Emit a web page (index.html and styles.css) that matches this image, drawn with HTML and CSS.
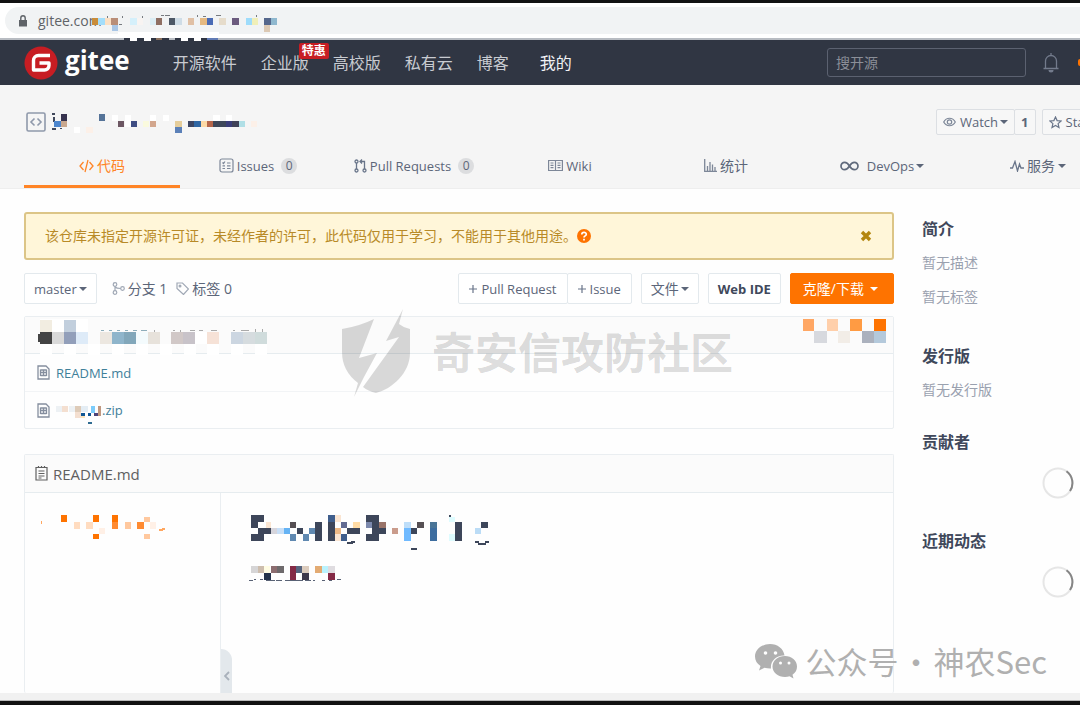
FILE: index.html
```
<!DOCTYPE html>
<html lang="zh-CN">
<head>
<meta charset="utf-8">
<meta name="viewport" content="width=device-width, initial-scale=1">
<title>Gitee</title>
<link rel="stylesheet" href="styles.css">
</head>
<body>
<div class="page">
  <div class="address-bar">
    <div class="address">
      <svg class="lock" width="10" height="12" viewBox="0 0 10 12" aria-hidden="true"><path d="M1 5h8v6.500H1z" fill="#5f6368"/><path d="M2.800 5V3a2.200 2.200 0 0 1 4.400 0v2" fill="none" stroke="#5f6368" stroke-width="1.400"/></svg>
      <span class="url">gitee.com/</span>
      <svg class="url-mask" width="192" height="28" viewBox="90 14 192 28" shape-rendering="crispEdges" aria-hidden="true">
        <path fill="#f1f3f4" d="M101 14h20v18h-20z"/>
        <path fill="#c98d3a" d="M92 18h6v7h-6z"/><path fill="#a4defb" d="M98 18h7v7h-7z"/><path fill="#fbe0c4" d="M105 18h6v7h-6z"/><path fill="#b98e78" d="M111 18h7v7h-7z"/><path fill="#a9c6e6" d="M112 25h6v6h-6z"/>
        <path fill="#777b80" d="M107 16h1v2h-1zM122 16h1v2h-1zM142 16h1v2h-1zM161 15h3v1h-3zM165 15h5v1h-5zM197 15h1v2h-1zM203 16h3v1h-3zM216 15h5v1h-5zM256 15h1v2h-1zM119 24h3v1h-3z"/>
        <path fill="#d5f0fb" d="M130 18h7v7h-7z"/><path fill="#f8f4f2" d="M137 18h6v7h-6z"/><path fill="#dceef5" d="M150 18h6v7h-6z"/><path fill="#8f6f63" d="M156 18h6v7h-6z"/><path fill="#4d5866" d="M169 18h6v7h-6z"/><path fill="#cfdde7" d="M175 18h7v7h-7z"/><path fill="#e0c0a5" d="M188 18h6v7h-6z"/><path fill="#e5b981" d="M200 18h7v7h-7z"/><path fill="#4a6bb5" d="M207 18h6v7h-6z"/><path fill="#e6dccb" d="M219 18h7v7h-7z"/><path fill="#6b5b7e" d="M232 18h7v7h-7z"/><path fill="#9edcfb" d="M246 18h6v7h-6z"/><path fill="#f0efb8" d="M252 18h6v7h-6z"/><path fill="#55678c" d="M264 18h7v7h-7z"/><path fill="#8fb8cf" d="M271 18h6v7h-6z"/><path fill="#dcc9b4" d="M264 25h6v7h-6z"/>
        <path fill="#fff" d="M118 32h101v6H118zM130 38h7v3h-7zM144 38h7v3h-7zM181 38h7v3h-7zM194 38h7v3h-7z"/><path fill="#2f3543" d="M124 38h6v2h-6zM137 38h7v2h-7zM151 38h5v2h-5zM162 38h7v2h-7zM175 38h6v2h-6zM188 38h6v2h-6zM201 38h6v2h-6z"/><path fill="#8a715f" d="M156 38h6v2h-6z"/><path fill="#617bb5" d="M207 38h11v2h-11z"/>
      </svg>
    </div>
  </div>

  <nav class="nav">
    <a class="brand" href="#" aria-label="gitee">
      <svg width="34" height="34" viewBox="0 0 34 34" aria-hidden="true"><circle cx="17" cy="17" r="16.500" fill="#c71d23"/><path d="M26 9.500H14.500a5 5 0 0 0-5 5V24H20.500a4.500 4.500 0 0 0 4.500-4.500v-2.500H15.500" fill="none" stroke="#fff" stroke-width="3.400" stroke-linejoin="round"/></svg>
      <span>gitee</span>
    </a>
    <div class="nav-links">
      <a href="#">开源软件</a>
      <a class="hot" href="#">企业版<span class="badge">特惠</span></a>
      <a href="#">高校版</a>
      <a href="#">私有云</a>
      <a href="#">博客</a>
      <a class="mine" href="#">我的</a>
    </div>
    <input class="search" type="search" placeholder="搜开源" aria-label="搜开源">
    <button class="bell" type="button" aria-label="通知">
      <svg width="16" height="20" viewBox="0 0 16 20" fill="none" stroke="#737b8c" stroke-width="1.300"><path d="M.500 15.500h15M2.500 15V8a5.500 5.500 0 0 1 11 0v7M8 2.500V0"/><path d="M5.500 17a2.500 2.500 0 0 0 5 0z" fill="#737b8c" stroke="none"/></svg>
    </button>
    <span class="dot"></span>
  </nav>

  <header class="repo-head">
    <div class="repo-title">
      <div class="repo-name">
        <svg width="20" height="20" viewBox="0 0 20 20" fill="none" stroke="#8f99ab" stroke-width="1.600" aria-hidden="true"><rect x="1" y="1" width="18" height="18" rx="1.500"/><path d="M8.500 6.500 5 10l3.500 3.500M11.500 6.500 15 10l-3.500 3.500"/></svg>
        <svg width="218" height="26" viewBox="50 109 218 26" shape-rendering="crispEdges" aria-hidden="true">
          <path fill="#40485b" d="M52 113h3v2h-3zM53 117h2v5h-2zM52 128h4v2h-4zM60 128h2v1h-2z"/><path fill="#4d86cd" d="M54 121h7v6h-7z"/><path fill="#37334f" d="M61 114h6v7h-6z"/><path fill="#c9a88f" d="M61 121h6v6h-6z"/><path fill="#557398" d="M99 114h6v7h-6z"/><path fill="#6d5763" d="M118 121h6v6h-6z"/><path fill="#3f4d83" d="M131 121h6v6h-6z"/><path fill="#fafade" d="M143 121h6v6h-6z"/><path fill="#d2a68d" d="M150 121h6v6h-6z"/><path fill="#e5cd9b" d="M175 121h7v6h-7z"/><path fill="#5b80b8" d="M175 127h7v6h-7z"/><path fill="#3c4562" d="M188 121h6v6h-6z"/><path fill="#2f66a3" d="M194 121h7v6h-7z"/><path fill="#fcd9a6" d="M201 121h6v6h-6z"/><path fill="#b5664b" d="M207 121h6v6h-6z"/><path fill="#3d4759" d="M213 121h13v6h-13z"/><path fill="#3a3d78" d="M226 121h6v6h-6z"/><path fill="#3f4157" d="M232 121h7v6h-7z"/><path fill="#b0dfe6" d="M239 121h6v6h-6z"/><path fill="#fcf0e8" d="M251 121h6v6h-6zM86 127h7v6h-7z"/><path fill="#fff" d="M74 127h6v6h-6zM112 115h6v6h-6zM125 115h6v12h-6zM150 115h6v6h-6zM163 115h6v6h-6zM213 115h7v6h-7zM226 115h6v6h-6z"/>
        </svg>
      </div>
      <div class="button-group">
        <button class="btn small" type="button"><svg width="13" height="12" viewBox="0 0 13 12" fill="none" stroke="#7d8798" stroke-width="1.200" aria-hidden="true"><path d="M.700 6C3.500 1 9.500 1 12.300 6 9.500 11 3.500 11 .700 6z"/><circle cx="6.500" cy="6" r="2.200"/></svg>Watch<i class="caret"></i></button><a class="btn small count" href="#">1</a>
      </div>
      <button class="btn small star" type="button"><svg width="13" height="13" viewBox="0 0 13 13" fill="none" stroke="#69758a" stroke-width="1.200" aria-hidden="true"><path d="m6.500 1 1.600 3.600 4 .400-3 2.600.900 3.900-3.500-2-3.500 2 .900-3.900-3-2.600 4-.400z"/></svg>Star</button>
    </div>
    <div class="tabs">
      <a class="tab active" href="#"><svg width="15" height="14" viewBox="0 0 15 14" fill="none" stroke="currentColor" stroke-width="1.300" aria-hidden="true"><path d="M4.500 3 1 7l3.500 4M10.500 3 14 7l-3.500 4M9 1 6 13"/></svg>代码</a>
      <a class="tab latin" href="#"><svg width="15" height="15" viewBox="0 0 15 15" fill="none" stroke="#7d8798" stroke-width="1.200" aria-hidden="true"><rect x="1" y="1" width="13" height="13" rx="2"/><path d="m3.500 4.500 1 1 1.500-2M8 5h3.500M3.500 7.800H6M8 7.800h3.500M3.500 10.500H6M8 10.500h3.500"/></svg>Issues<span class="num">0</span></a>
      <a class="tab latin" href="#"><svg width="13" height="14" viewBox="0 0 13 14" fill="none" stroke="#69758a" stroke-width="1.300" aria-hidden="true"><circle cx="2.500" cy="2.500" r="1.500"/><circle cx="2.500" cy="11.500" r="1.500"/><circle cx="10.500" cy="11.500" r="1.500"/><path d="M2.500 4v6M10.500 10V2.500H6M8 .500l-2 2 2 2"/></svg>Pull Requests<span class="num">0</span></a>
      <a class="tab latin" href="#"><svg width="15" height="13" viewBox="0 0 15 13" fill="none" stroke="#7d8798" stroke-width="1.200" aria-hidden="true"><path d="M.600 1.500h13.800v10H.600zM7.500 1.500v10M2.500 4h3M2.500 6.300h3M2.500 8.600h3M9.500 4h3M9.500 6.300h3M9.500 8.600h3"/></svg>Wiki</a>
      <a class="tab" href="#"><svg width="13" height="13" viewBox="0 0 13 13" fill="none" stroke="#7d8798" stroke-width="1.300" aria-hidden="true"><path d="M.700 0v12.300H13M3.500 12V7M6 12V3M8.500 12V5.500M11 12V8"/></svg>统计</a>
      <a class="tab latin wide" href="#"><svg width="19" height="10" viewBox="0 0 19 10" fill="none" stroke="#606a7c" stroke-width="1.700" aria-hidden="true"><path d="M9.500 5C8 2.500 6.500 1.300 4.700 1.300a3.700 3.700 0 0 0 0 7.400C6.500 8.700 8 7.500 9.500 5s3-3.700 4.800-3.700a3.700 3.700 0 0 1 0 7.400C12.500 8.700 11 7.500 9.500 5z"/></svg>DevOps<i class="caret"></i></a>
      <a class="tab" href="#"><svg width="14" height="12" viewBox="0 0 14 12" fill="none" stroke="#69758a" stroke-width="1.300" aria-hidden="true"><path d="M0 8h2.500L5 1.500 7.500 11 9.500 4 11 8h3"/></svg>服务<i class="caret"></i></a>
    </div>
  </header>

  <div class="content">
    <main class="main">
      <div class="notice">
        <span>该仓库未指定开源许可证，未经作者的许可，此代码仅用于学习，不能用于其他用途。</span>
        <svg width="14" height="14" viewBox="0 0 14 14" aria-hidden="true"><circle cx="7" cy="7" r="7" fill="#fe7300"/><path d="M4.800 5.500C4.800 2.700 9.300 2.800 9.300 5.300 9.300 7 7 6.800 7 8.500M7 9.700v1.800" fill="none" stroke="#fff" stroke-width="1.700"/></svg>
        <button class="close" type="button" aria-label="关闭"><svg width="12" height="12" viewBox="0 0 12 12"><path d="m2 2 8 8M10 2l-8 8" stroke="#b4860e" stroke-width="3.400"/></svg></button>
      </div>

      <div class="toolbar">
        <button class="btn latin" type="button">master<i class="caret"></i></button>
        <a class="ref branches" href="#"><svg width="13" height="13" viewBox="0 0 13 13" fill="none" stroke="#a0a8b5" stroke-width="1.200" aria-hidden="true"><circle cx="3" cy="2.500" r="1.800"/><circle cx="3" cy="10.500" r="1.800"/><circle cx="10.500" cy="6.500" r="1.800"/><path d="M3 4.300v4.400M3 5c1.500 1.500 3.500 1.500 5.700 1.500"/></svg>分支 1</a>
        <a class="ref" href="#"><svg width="13" height="13" viewBox="0 0 13 13" fill="none" stroke="#a0a8b5" stroke-width="1.200" aria-hidden="true"><path d="M1 1h5.500l6 6-5 5.500L1 6.500z"/><circle cx="4" cy="4" r=".900"/></svg>标签 0</a>
        <div class="button-group push">
          <button class="btn latin" type="button"><svg width="8" height="8" viewBox="0 0 8 8" aria-hidden="true"><path d="M0 4h8M4 0v8" stroke="#69758a" stroke-width="1.200"/></svg>Pull Request</button><button class="btn latin" type="button"><svg width="8" height="8" viewBox="0 0 8 8" aria-hidden="true"><path d="M0 4h8M4 0v8" stroke="#69758a" stroke-width="1.200"/></svg>Issue</button>
        </div>
        <button class="btn" type="button">文件<i class="caret"></i></button>
        <button class="btn latin strong" type="button">Web IDE</button>
        <button class="btn primary" type="button">克隆/下载<i class="caret"></i></button>
      </div>

      <section class="panel files">
        <div class="commit">
          <svg width="240" height="36" viewBox="36 318 240 36" shape-rendering="crispEdges" aria-hidden="true">
            <path fill="#fff" d="M40 318h48v13H40zM40 343h12v11H40zM64 343h12v11H64zM88 343h12v11H88zM112 343h12v11h-12zM136 343h12v11h-12zM160 343h12v11h-12zM184 343h12v11h-12zM207 343h12v11h-12zM231 343h12v11h-12zM255 343h12v11h-12z"/>
            <path fill="#f2ede1" d="M40 319h12v12H40z"/><path fill="#c2cfdd" d="M64 319h12v12H64z"/><path fill="#444" d="M40 331h12v12H40zM38 333h2v8h-2z"/><path fill="#d9d9d9" d="M52 331h12v12H52z"/><path fill="#929fba" d="M64 331h12v12H64z"/><path fill="#deebf8" d="M76 331h12v12H76z"/><path fill="#ece7e0" d="M100 331h12v12h-12z"/><path fill="#8fb5cb" d="M112 331h12v12h-12z"/><path fill="#82a7ba" d="M124 331h12v12h-12z"/><path fill="#f4fbfd" d="M136 331h12v12h-12z"/><path fill="#e7e2db" d="M148 331h12v12h-12z"/><path fill="#d1c8c7" d="M171 331h12v12h-12z"/><path fill="#c8c3c9" d="M183 331h12v12h-12z"/><path fill="#fff" d="M195 331h12v12h-12z"/><path fill="#f6e2d7" d="M207 331h12v12h-12z"/><path fill="#ccd6e1" d="M231 331h12v12h-12z"/><path fill="#d6dcdf" d="M243 331h12v12h-12z"/><path fill="#d0dcdc" d="M255 331h12v12h-12z"/>
            <path fill="#8eaebb" d="M101 329h3v1h-3zM109 329h3v1h-3zM117 329h3v1h-3zM125 329h3v1h-3zM133 329h4v1h-4zM141 329h6v1h-6z"/><path fill="#aaa" d="M154 329h1v2h-1zM173 329h2v1h-2zM180 329h1v2h-1zM190 329h5v1h-5zM199 329h4v1h-4zM211 329h6v1h-6zM233 329h2v1h-2zM241 329h8v1h-8zM255 328h1v3h-1zM262 328h1v3h-1z"/>
          </svg>
          <svg class="commit-side" width="84" height="26" viewBox="802 319 84 26" shape-rendering="crispEdges" aria-hidden="true">
            <path fill="#ffa764" d="M803 319h11v12h-11z"/><path fill="#ffcfaa" d="M827 319h11v12h-11z"/><path fill="#ff9b43" d="M850 319h12v12h-12z"/><path fill="#fe7300" d="M874 319h12v12h-12z"/><path fill="#d7d9de" d="M814 331h13v12h-13z"/><path fill="#f2ede7" d="M838 331h12v12h-12z"/><path fill="#abb1bd" d="M862 331h12v12h-12z"/><path fill="#b4c9db" d="M874 331h12v12h-12z"/>
          </svg>
        </div>
        <a class="file-row latin" href="#">
          <svg width="13" height="15" viewBox="0 0 13 15" fill="none" stroke="#858e9e" stroke-width="1.300" aria-hidden="true"><path d="M1 1h8l3 3v10H1zM3.500 5h6M3.500 7.500h6M3.500 10.500h6M3.500 4.500v6.500M6.500 4.500v6.500M9.500 4.500v6.500"/></svg>
          README.md</a>
        <a class="file-row latin" href="#">
          <svg width="13" height="15" viewBox="0 0 13 15" fill="none" stroke="#858e9e" stroke-width="1.300" aria-hidden="true"><path d="M1 1h8l3 3v10H1zM3.500 5h6M3.500 7.500h6M3.500 10.500h6M3.500 4.500v6.500M6.500 4.500v6.500M9.500 4.500v6.500"/></svg>
          <span class="zip"><svg width="46" height="28" viewBox="55 397 46 28" shape-rendering="crispEdges" aria-hidden="true"><path fill="#edf1f4" d="M55 407h6v6h-6zM68 407h6v6h-6z"/><path fill="#f4dfd0" d="M61 407h6v6h-6zM74 413h6v6h-6z"/><path fill="#decbb8" d="M74 407h6v6h-6z"/><path fill="#e4edf4" d="M80 407h7v6h-7z"/><path fill="#fbe4bd" d="M80 415h4v4h-4z"/><path fill="#0f5695" d="M80 414h4v3h-4zM87 414h3v3h-3z"/><path fill="#7cccfb" d="M90 407h4v7h-4z"/><path fill="#c09880" d="M97 407h3v10h-3z"/><path fill="#4c4378" d="M93 414h4v3h-4z"/><path fill="#2f6c91" d="M87 423h4v2h-4z"/></svg>.zip</span></a>
      </section>

      <section class="panel readme">
        <h2 class="readme-head"><svg width="13" height="15" viewBox="0 0 13 15" fill="none" stroke="#606060" stroke-width="1.200" aria-hidden="true"><path d="M1 1.500h11v12.500H1zM3.500 0v2M6.500 0v2M9.500 0v2M3.500 5h6M3.500 7.500h6M3.500 10h6M3.500 12h3"/></svg>README.md</h2>
        <div class="readme-body">
          <aside class="toc">
            <svg width="128" height="26" viewBox="40 514 128 26" shape-rendering="crispEdges" aria-hidden="true"><path fill="#fe7300" d="M61 515h6v7h-6zM93 515h6v7h-6zM93 534h6v5h-6zM112 515h6v7h-6z"/><path fill="#ff8b32" d="M112 522h6v7h-6zM137 522h7v7h-7z"/><path fill="#ffdcc0" d="M74 522h6v7h-6zM86 522h7v7h-7z"/><path fill="#ffc89e" d="M125 522h6v7h-6zM144 517h6v5h-6zM144 534h6v5h-6z"/><path fill="#fff0e6" d="M150 522h6v7h-6zM99 528h6v6h-6z"/><path fill="#ffa760" d="M41 521h1v3h-1zM159 529h4v2h-4zM162 528h3v2h-3z"/></svg>
            <button class="fold" type="button" aria-label="收起"><svg width="6" height="10" viewBox="0 0 6 10" aria-hidden="true"><path d="M5 1 1 5l4 4" fill="none" stroke="#a9b1bb" stroke-width="1.800"/></svg></button>
          </aside>
          <article class="doc">
            <svg width="250" height="74" viewBox="248 512 250 74" shape-rendering="crispEdges" aria-hidden="true">
              <path fill="#3d465a" d="M251 515h13v7h-13zM251 522h7v6h-7zM258 528h13v6h-13zM251 534h13v7h-13zM297 528h6v6h-6zM315 522h7v19h-7zM328 522h7v19h-7zM347 528h13v6h-13zM366 515h13v7h-13zM372 522h7v6h-7zM372 528h14v6h-14zM366 534h13v7h-13zM411 528h6v6h-6zM455 522h7v19h-7zM481 522h7v6h-7zM411 548h6v2h-6zM347 542h6v2h-6zM351 541h4v2h-4zM475 541h4v2h-4zM478 543h8v2h-8zM485 541h4v2h-4zM449 515h2v2h-2z"/>
              <path fill="#565054" d="M290 522h6v6h-6zM417 522h7v6h-7z"/><path fill="#d6d5dc" d="M271 528h6v6h-6z"/><path fill="#c8dff7" d="M277 528h7v6h-7z"/><path fill="#65b3f4" d="M284 528h6v6h-6z"/><path fill="#6089b1" d="M290 534h6v7h-6zM303 534h6v7h-6zM309 528h6v6h-6z"/><path fill="#3f5e8c" d="M328 515h7v7h-7zM341 534h6v7h-6z"/><path fill="#fae5d2" d="M335 515h6v7h-6zM335 534h6v7h-6zM266 522h5v6h-5z"/><path fill="#edb987" d="M335 528h6v6h-6z"/><path fill="#636b92" d="M341 522h6v6h-6z"/><path fill="#ffdba5" d="M353 522h7v6h-7z"/><path fill="#7c89ad" d="M366 522h6v6h-6z"/><path fill="#9a7469" d="M379 522h7v6h-7z"/><path fill="#ca9c8c" d="M392 528h6v6h-6z"/><path fill="#70baff" d="M404 528h7v13h-7z"/><path fill="#bedef9" d="M404 522h7v6h-7z"/><path fill="#4a7597" d="M430 522h7v6h-7z"/><path fill="#3d6d9f" d="M430 528h7v13h-7z"/><path fill="#defcff" d="M449 517h6v5h-6zM449 534h6v7h-6z"/><path fill="#bbdcf6" d="M475 528h6v6h-6z"/>
              <path fill="#d6d5d6" d="M251 566h7v7h-7z"/><path fill="#cdbdad" d="M258 566h6v7h-6z"/><path fill="#fffce3" d="M264 566h6v7h-6z"/><path fill="#8c6d70" d="M271 566h6v7h-6z"/><path fill="#6e6a6c" d="M277 566h7v7h-7z"/><path fill="#25334b" d="M264 573h7v7h-7z"/><path fill="#842a46" d="M290 566h6v14h-6zM328 573h7v7h-7z"/><path fill="#56647e" d="M296 566h6v7h-6z"/><path fill="#dcccbd" d="M302 566h7v7h-7z"/><path fill="#3d394b" d="M302 573h7v7h-7z"/><path fill="#e3ab73" d="M315 566h7v7h-7z"/><path fill="#baf3fe" d="M322 566h6v7h-6z"/><path fill="#dfdce0" d="M328 566h7v7h-7z"/><path fill="#596275" d="M249 580h4v1h-4zM254 579h2v1h-2zM260 579h3v1h-3zM266 580h9v1h-9zM276 580h6v1h-6zM285 580h18v1h-18zM305 580h6v1h-6zM313 580h2v1h-2zM322 580h3v1h-3zM329 580h3v1h-3zM337 579h4v1h-4z"/>
            </svg>
          </article>
        </div>
      </section>
    </main>

    <aside class="side">
      <section><h3>简介</h3><p>暂无描述</p><p>暂无标签</p></section>
      <section><h3>发行版</h3><p>暂无发行版</p></section>
      <section><h3>贡献者</h3><svg class="spinner" width="32" height="32" viewBox="0 0 32 32" fill="none" aria-hidden="true"><circle cx="16" cy="16" r="14.500" stroke="#e6e6e6" stroke-width="2"/><path d="M24.500 4.300A14.500 14.500 0 0 1 28 24" stroke="#858585" stroke-width="2"/></svg></section>
      <section><h3>近期动态</h3><svg class="spinner" width="32" height="32" viewBox="0 0 32 32" fill="none" aria-hidden="true"><circle cx="16" cy="16" r="14.500" stroke="#e6e6e6" stroke-width="2"/><path d="M24.500 4.300A14.500 14.500 0 0 1 28 24" stroke="#858585" stroke-width="2"/></svg></section>
    </aside>
  </div>

  <div class="watermark community">
    <svg width="70" height="90" viewBox="341 308 70 90" fill="currentColor" aria-hidden="true"><path d="M342 329q18-3 32-10l-15 39 18-5-13 24-10 20 4-14q-16-12-16-31zM403 309l-4 15q5 4 11 5v24c0 20-18 36-34 40q-8-2-13-6l36-50-13 4z"/></svg>
    <span>奇安信攻防社区</span>
  </div>
  <div class="watermark account">
    <svg width="43" height="36" viewBox="756 642 43 36" aria-hidden="true"><path fill="#b0b0b0" d="M771 643c-8 0-15 5.500-15 12.500 0 4 2 7.200 5.500 9.500l-1.500 4.500 5.500-2.800q3 .900 6.500.800c-1-7 5-13.500 13.500-13-1-7-7-11.500-14.500-11.500z"/><path fill="#b0b0b0" d="M786 655c-7 0-12.500 4.500-12.500 10.500S779 676 786 676q2.500 0 4.500-.700l4 2.200-1-3.700c3-2 4.500-5 4.500-8.300 0-6-5.500-10.500-12-10.500z"/><g fill="#fff"><circle cx="766.500" cy="652" r="1.800"/><circle cx="776.500" cy="652" r="1.800"/><circle cx="781.500" cy="662" r="1.500"/><circle cx="790" cy="662" r="1.500"/></g></svg>
    <div class="account-name"><span>公众号</span><span>·</span><span>神农Sec</span></div>
  </div>
</div>
</body>
</html>
```
FILE: styles.css
```
* { box-sizing: border-box; }
body {
  margin: 0;
  font: 14px/20px "Open Sans", "Noto Sans CJK SC", sans-serif;
  color: #5c6679;
  background: #fefefe;
}
a { color: inherit; text-decoration: none; }
button { font: inherit; color: inherit; cursor: pointer; }
svg { display: block; flex: none; }
h2, h3, p { margin: 0; }
.latin { font-size: 13px; }

.page {
  position: relative;
  display: flex;
  flex-direction: column;
  height: 100vh;
  overflow: hidden;
  border-top: 3px solid #121212;
  border-bottom: 4px solid #121212;
}
.page::after { content: ""; flex: none; height: 7px; background: #f1f1f1; border-bottom: 1px solid #bbb; }

.address-bar { flex: none; height: 37px; padding: 4px 0 0 5px; background: #fff; border-bottom: 2px solid #b8bcc2; }
.address {
  position: relative;
  display: flex;
  align-items: center;
  gap: 10px;
  height: 27px;
  padding-left: 13px;
  border-radius: 14px 0 0 14px;
  background: #f1f3f4;
  color: #5f6368;
}
.url-mask { position: absolute; left: 85px; top: 7px; z-index: 1; }

.nav { flex: none; display: flex; align-items: center; height: 45px; padding: 0 0 0 24px; background: #303643; color: #c8cbd1; }
.brand { display: flex; align-items: center; gap: 7px; color: #fff; font-size: 26px; font-weight: 700; line-height: 32px; }
.brand span { padding-bottom: 6px; }
.nav-links { display: flex; gap: 24px; margin-left: 43px; font-size: 16px; white-space: nowrap; }
.nav-links .mine { margin-left: 7px; color: #f0f1f3; }
.hot { position: relative; }
.badge {
  position: absolute;
  left: 38px;
  top: -10px;
  padding: 0 3px;
  border-radius: 2px;
  background: #c71d23;
  color: #fff;
  font-size: 12px;
  font-weight: 700;
  line-height: 16px;
}
.search {
  width: 199px;
  height: 29px;
  margin-left: auto;
  padding: 0 8px;
  border: 1px solid #5b6170;
  border-radius: 3px;
  background: transparent;
  color: #fff;
  font: inherit;
}
.search::placeholder { color: #8b8f98; opacity: 1; }
.bell { margin: 0 19px 0 17px; padding: 0; border: 0; background: none; }
.dot { flex: none; width: 2px; height: 7px; border-radius: 4px 0 0 4px; background: #fe7300; }

.repo-head { flex: none; height: 104px; padding: 20px 0 0 24px; background: #f5f5f5; border-bottom: 1px solid #eee; }
.repo-title { display: flex; align-items: center; height: 34px; }
.repo-name { flex: 0 0 912px; display: flex; align-items: center; gap: 4px; padding-left: 2px; }
.tabs { display: grid; grid-template-columns: repeat(7, 156px); margin-top: 7px; }
.tab { display: flex; align-items: center; justify-content: center; gap: 3px; height: 42px; border-bottom: 3px solid transparent; }
.tab.active { color: #ff8426; border-color: #ff8426; }
.tab.wide { gap: 8px; }
.tab.wide .caret { margin-left: -6px; }
.num { min-width: 16px; height: 16px; margin-left: 4px; border-radius: 8px; background: #dcdddf; font-size: 12px; line-height: 16px; text-align: center; }
.caret { width: 0; border: 4px solid transparent; border-top-color: currentColor; border-bottom: 0; }

.btn {
  flex: none;
  display: flex;
  align-items: center;
  gap: 4px;
  height: 31px;
  padding: 0 9px;
  border: 1px solid #e3e9ed;
  border-radius: 2px;
  background: #fff;
  white-space: nowrap;
}
.btn.small { height: 26px; padding: 0 6px; background: #f7f7f7; border-color: #dcdfe3; font-size: 13px; }
.btn.count { font-weight: 700; }
.star { margin-left: 6px; }
.button-group { flex: none; display: flex; }
.button-group .btn + .btn { margin-left: -1px; }
.push .btn { padding: 0 10px; }
.btn.strong { font-weight: 700; color: #40485b; }
.btn.primary { gap: 8px; padding: 0 15px 0 12px; border-color: #fe7300; background: #fe7300; color: #fff; }
.btn .caret { margin-left: -2px; }

.content { flex: 1; min-height: 0; display: flex; gap: 28px; width: 100%; min-width: 1194px; padding: 23px 0 0 24px; }
.main { flex: 1; display: flex; flex-direction: column; min-width: 0; }
.side { flex: 0 0 272px; padding-top: 7px; color: #9aa1af; }

.notice {
  flex: none;
  display: flex;
  align-items: center;
  height: 48px;
  padding: 0 20px 0 19px;
  border: 2px solid #dcc587;
  border-radius: 3px;
  background: #fff6d9;
  color: #b88a27;
}
.close { margin-left: auto; padding: 0; border: 0; background: none; }
.toolbar { flex: none; display: flex; align-items: center; gap: 9px; padding: 13px 0 12px; }
.ref { display: flex; align-items: center; gap: 3px; }
.branches { margin-left: 6px; }
.push { margin-left: auto; }

.panel { border: 1px solid #eaeef1; border-radius: 2px; }
.files { flex: none; }
.commit { display: flex; height: 37px; padding: 2px 7px 0 11px; background: #fbfbfb; border-bottom: 1px solid #e6ecef; }
.commit-side { margin-left: auto; }
.file-row { display: flex; align-items: center; gap: 6px; height: 37px; padding: 0 12px; color: #40809a; }
.file-row + .file-row { border-top: 1px solid #f2f4f6; }
.zip { display: flex; align-items: center; }
.readme { flex: 1; min-height: 0; display: flex; flex-direction: column; margin-top: 25px; border-bottom: 0; }
.readme-head { flex: none; display: flex; align-items: center; gap: 5px; height: 38px; padding: 0 10px; border-bottom: 1px solid #e6ecef; background: #fbfbfb; color: #606060; font-size: 15px; font-weight: 400; }
.readme-body { flex: 1; display: flex; min-height: 0; }
.toc { position: relative; flex: 0 0 196px; padding: 21px 0 0 15px; border-right: 1px solid #eaeef1; }
.fold {
  position: absolute;
  left: 196px;
  bottom: 0;
  display: flex;
  align-items: center;
  width: 11px;
  height: 44px;
  padding: 10px 3px 0;
  border: 0;
  border-radius: 0 11px 0 0;
  background: #e3e8ec;
}
.doc { padding: 19px 0 0 27px; }

.side h3 { color: #40485b; font-size: 16px; line-height: 20px; }
.side p { margin-top: 14px; }
.side section + section { margin-top: 39px; }
.side section:nth-child(n + 3) { margin-top: 32px; }
.spinner { margin: 15px auto 0; }

.watermark { position: absolute; display: flex; align-items: center; white-space: nowrap; }
.community { left: 341px; top: 305px; gap: 21px; color: rgba(0, 0, 0, .15); font-size: 43px; font-weight: 700; line-height: 60px; }
.account { right: 33px; bottom: 20px; gap: 8px; color: #b0b0b0; font: 400 31px/40px "Noto Sans CJK SC", "Open Sans", sans-serif; }
.account-name { display: flex; gap: 2px; }
```
